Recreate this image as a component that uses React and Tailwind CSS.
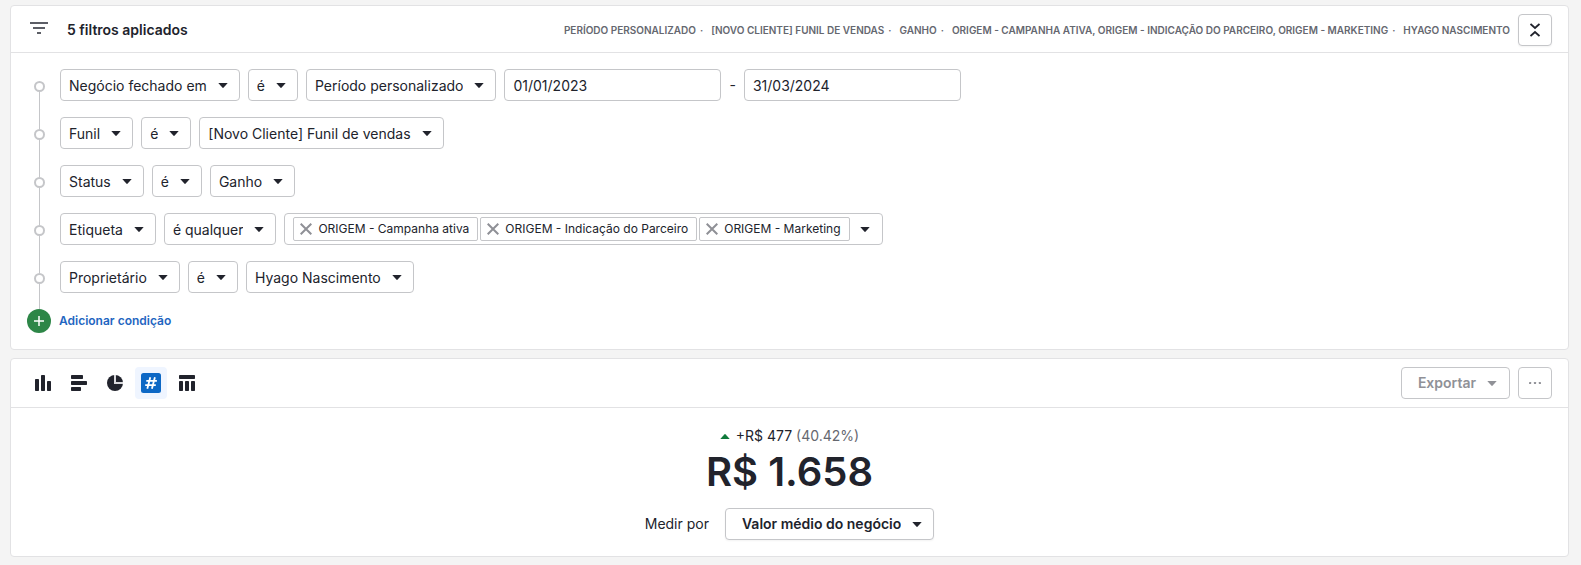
import { Fragment } from "react";

const SUMMARY = [
  "Período personalizado",
  "[Novo Cliente] Funil de vendas",
  "Ganho",
  "ORIGEM - Campanha ativa, ORIGEM - Indicação do Parceiro, ORIGEM - Marketing",
  "Hyago Nascimento",
];

const TAGS = ["ORIGEM - Campanha ativa", "ORIGEM - Indicação do Parceiro", "ORIGEM - Marketing"];

function Caret({ className = "" }) {
  return (
    <svg viewBox="0 0 10 5" className={`h-[5px] w-[10px] fill-current ${className}`} aria-hidden="true">
      <path d="M.3 0h9.4L5.7 4.6a1 1 0 0 1-1.4 0z" />
    </svg>
  );
}

function Select({ label, value, strong = false }) {
  return (
    <span className="relative inline-flex text-[#21232c]">
      <select
        aria-label={label}
        defaultValue={value}
        className={
          strong
            ? "field-sizing-content h-8 appearance-none rounded border border-[#c5c6c9] bg-white pr-8 pl-4 text-sm font-semibold shadow-xs"
            : "field-sizing-content h-8 appearance-none rounded border border-[#c5c6c9] bg-white pt-[2px] pr-8 pl-2 text-sm"
        }
      >
        <option>{value}</option>
      </select>
      <Caret className="pointer-events-none absolute top-[14px] right-3" />
    </span>
  );
}

function DateInput({ label, value }) {
  return (
    <input
      type="text"
      aria-label={label}
      defaultValue={value}
      className="h-8 w-[217px] rounded border border-[#c5c6c9] bg-white px-2 text-sm"
    />
  );
}

function Condition({ first = false, children }) {
  return (
    <li className="flex gap-2">
      <span className="flex w-[25px] shrink-0 flex-col items-center" aria-hidden="true">
        <span className={first ? "h-3 w-px" : "h-3 w-px bg-[#c5c6c9]"} />
        <span className="size-[11px] rounded-full border-2 border-[#c5c6c9] bg-white" />
        <span className="w-px flex-1 bg-[#c5c6c9]" />
      </span>
      <div className="flex flex-wrap items-center gap-2 pb-4">{children}</div>
    </li>
  );
}

function Tag({ text }) {
  return (
    <span className="flex h-6 items-center gap-[6px] rounded-xs border border-[#c5c6c9] pr-2 pl-[6px] text-xs">
      <button type="button" aria-label={`Remover ${text}`} className="text-[#8f9096]">
        <svg viewBox="0 0 12 12" className="size-3 stroke-current" fill="none" strokeWidth="2">
          <path d="M.7 .7l10.6 10.6M11.3 .7L.7 11.3" />
        </svg>
      </button>
      {text}
    </span>
  );
}

function ChartButton({ label, active = false, children }) {
  return (
    <button
      type="button"
      aria-label={label}
      aria-pressed={active}
      className={
        active
          ? "flex size-8 items-center justify-center rounded bg-[#eff5ff]"
          : "flex size-8 items-center justify-center rounded"
      }
    >
      {children}
    </button>
  );
}

export default function App() {
  return (
    <main className="flex min-h-screen flex-col gap-2 bg-[#f4f4f4] pt-[5px] pr-3 pb-2 pl-[10px] font-['Inter',sans-serif] text-sm text-[#21232c]">
      <section className="rounded border border-[#e2e2e4] bg-white">
        <header className="flex items-center gap-2 border-b border-[#e2e2e4] px-4 pt-2 pb-[6px]">
          <svg viewBox="0 0 24 24" className="mb-1 size-6 fill-[#5c5e66]" aria-hidden="true">
            <path d="M10 18h4v-2h-4v2zM3 6v2h18V6H3zm3 7h12v-2H6v2z" />
          </svg>
          <h2 className="ml-2 font-semibold whitespace-nowrap">5 filtros aplicados</h2>
          <p className="ml-auto text-right text-[10px] font-semibold text-[#65676f] uppercase">
            {SUMMARY.map((item, i) => (
              <Fragment key={item}>
                {i > 0 && <span className="mr-2 ml-1">·</span>}
                {item}
              </Fragment>
            ))}
          </p>
          <button
            type="button"
            aria-label="Recolher filtros"
            className="flex h-8 w-[34px] items-center justify-center rounded border border-[#c5c6c9] bg-white shadow-xs"
          >
            <svg viewBox="0 0 10 14" className="h-[14px] w-[10px] stroke-[#21232c]" fill="none" strokeWidth="1.8">
              <path d="M.5 1L5 5 9.5 1M.5 13L5 9 9.5 13" />
            </svg>
          </button>
        </header>

        <div className="p-4">
          <ul>
            <Condition first>
              <Select label="Campo" value="Negócio fechado em" />
              <Select label="Operador" value="é" />
              <Select label="Período" value="Período personalizado" />
              <DateInput label="Data inicial" value="01/01/2023" />
              <span>-</span>
              <DateInput label="Data final" value="31/03/2024" />
            </Condition>
            <Condition>
              <Select label="Campo" value="Funil" />
              <Select label="Operador" value="é" />
              <Select label="Valor" value="[Novo Cliente] Funil de vendas" />
            </Condition>
            <Condition>
              <Select label="Campo" value="Status" />
              <Select label="Operador" value="é" />
              <Select label="Valor" value="Ganho" />
            </Condition>
            <Condition>
              <Select label="Campo" value="Etiqueta" />
              <Select label="Operador" value="é qualquer" />
              <div className="flex min-h-8 items-center gap-[2px] rounded border border-[#c5c6c9] pl-2">
                {TAGS.map((tag) => (
                  <Tag key={tag} text={tag} />
                ))}
                <button type="button" aria-label="Abrir etiquetas" className="self-stretch pr-3 pl-2">
                  <Caret />
                </button>
              </div>
            </Condition>
            <Condition>
              <Select label="Campo" value="Proprietário" />
              <Select label="Operador" value="é" />
              <Select label="Valor" value="Hyago Nascimento" />
            </Condition>
          </ul>
          <button type="button" className="flex items-center gap-2 text-xs font-semibold text-[#1f66c1]">
            <span className="flex size-6 items-center justify-center rounded-full bg-[#2d8647]">
              <svg viewBox="0 0 10 10" className="size-[10px] stroke-white" strokeWidth="1.5" aria-hidden="true">
                <path d="M5 0v10M0 5h10" />
              </svg>
            </span>
            Adicionar condição
          </button>
        </div>
      </section>

      <section className="rounded border border-[#e2e2e4] bg-white">
        <header className="flex items-center gap-2 border-b border-[#e2e2e4] px-4 py-2">
          <div className="flex gap-1">
            <ChartButton label="Gráfico de colunas">
              <svg viewBox="0 0 16 16" className="size-4 fill-[#21232c]">
                <rect y="4" width="4" height="12" rx=".7" />
                <rect x="6" width="4" height="16" rx=".7" />
                <rect x="12" y="6" width="4" height="10" rx=".7" />
              </svg>
            </ChartButton>
            <ChartButton label="Gráfico de barras">
              <svg viewBox="0 0 16 16" className="size-4 fill-[#21232c]">
                <rect width="12" height="4" rx=".7" />
                <rect y="6" width="16" height="4" rx=".7" />
                <rect y="12" width="10" height="4" rx=".7" />
              </svg>
            </ChartButton>
            <ChartButton label="Gráfico de pizza">
              <svg viewBox="0 0 16 16" className="size-4">
                <circle cx="8" cy="8" r="8" fill="#21232c" />
                <path d="M8 0v8h8" fill="none" stroke="#d9d9dc" strokeWidth="2" />
              </svg>
            </ChartButton>
            <ChartButton label="Placar" active>
              <svg viewBox="0 0 20 20" className="size-5">
                <rect width="20" height="20" rx="2.5" fill="#0d68c5" />
                <path
                  d="M9.3 4.3L6.3 15.7M13.9 4.3l-3 11.4M5.3 7.8h10.6M4.2 12.2h10.6"
                  fill="none"
                  stroke="#fff"
                  strokeWidth="1.8"
                />
              </svg>
            </ChartButton>
            <ChartButton label="Tabela">
              <svg viewBox="0 0 16 16" className="size-4 fill-[#21232c]">
                <rect width="16" height="4" rx=".7" />
                <rect y="6" width="4" height="10" rx=".7" />
                <rect x="6" y="6" width="4" height="10" rx=".7" />
                <rect x="12" y="6" width="4" height="10" rx=".7" />
              </svg>
            </ChartButton>
          </div>
          <button
            type="button"
            className="ml-auto flex h-8 items-center gap-[11px] rounded border border-[#c5c6c9] pr-3 pl-4 font-semibold text-[#909197]"
          >
            Exportar
            <Caret />
          </button>
          <button
            type="button"
            aria-label="Mais opções"
            className="flex h-8 w-[34px] items-center justify-center rounded border border-[#c5c6c9]"
          >
            <svg viewBox="0 0 12 2" className="h-[2px] w-3 fill-[#909197]">
              <rect width="2.2" height="2" rx=".4" />
              <rect x="4.9" width="2.2" height="2" rx=".4" />
              <rect x="9.8" width="2.2" height="2" rx=".4" />
            </svg>
          </button>
        </header>

        <div className="flex flex-col items-center p-4">
          <p className="flex items-center gap-[6px] leading-6">
            <svg viewBox="0 0 10 5" className="h-[5px] w-[10px] fill-[#107a3b]" aria-hidden="true">
              <path d="M.3 5h9.4L5.7.4a1 1 0 0 0-1.4 0z" />
            </svg>
            <span>
              +R$ 477 <span className="text-[#65676f]">(40.42%)</span>
            </span>
          </p>
          <p className="text-[40px] leading-12 font-semibold">R$ 1.658</p>
          <div className="mt-3 flex items-center gap-4">
            <span>Medir por</span>
            <Select label="Medir por" value="Valor médio do negócio" strong />
          </div>
        </div>
      </section>
    </main>
  );
}
